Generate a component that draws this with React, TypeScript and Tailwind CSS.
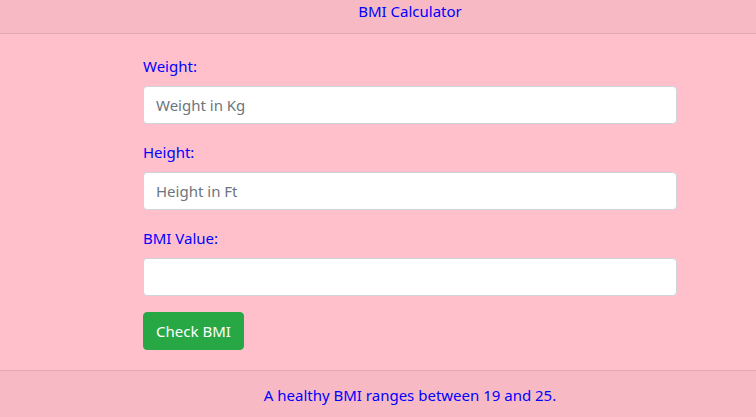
import React from 'react';

const App: React.FC = () => {
  return (
    <div className="min-h-[417px] w-[756px] overflow-hidden bg-[#ffc0cb] font-['Noto_Sans',sans-serif] text-[15px]">
      <div className="w-[820px]">
        <div className="h-[34px] border-b border-[#e0a9b2] bg-[#f7bac5] text-center leading-6 text-[#0000ff]">
          <div className="-translate-y-px">BMI Calculator</div>
        </div>

        <div className="px-[143px] py-5">
          <form className="w-[534px]" onSubmit={(e) => e.preventDefault()}>
            <div className="mb-4">
              <label className="mb-2 block leading-6 text-[#0000ff]">Weight:</label>
              <input
                type="text"
                placeholder="Weight in Kg"
                className="block h-[38px] w-full rounded border border-[#ced4da] bg-white px-3 text-[#495057] placeholder:text-[#6c757d] outline-none"
              />
            </div>
            <div className="mb-4">
              <label className="mb-2 block leading-6 text-[#0000ff]">Height:</label>
              <input
                type="text"
                placeholder="Height in Ft"
                className="block h-[38px] w-full rounded border border-[#ced4da] bg-white px-3 text-[#495057] placeholder:text-[#6c757d] outline-none"
              />
            </div>
            <div className="mb-4">
              <label className="mb-2 block leading-6 text-[#0000ff]">BMI Value:</label>
              <input
                type="text"
                className="block h-[38px] w-full rounded border border-[#ced4da] bg-white px-3 text-[#495057] outline-none"
              />
            </div>
            <button
              type="submit"
              className="block h-[38px] w-[101px] whitespace-nowrap rounded border border-[#28a745] bg-[#28a745] leading-6 text-white"
            >
              Check BMI
            </button>
          </form>
        </div>

        <div className="border-t border-[#e0a9b2] bg-[#f7bac5] py-3 text-center leading-6 text-[#0000ff]">
          A healthy BMI ranges between 19 and 25.
        </div>
      </div>
    </div>
  );
};

export default App;
